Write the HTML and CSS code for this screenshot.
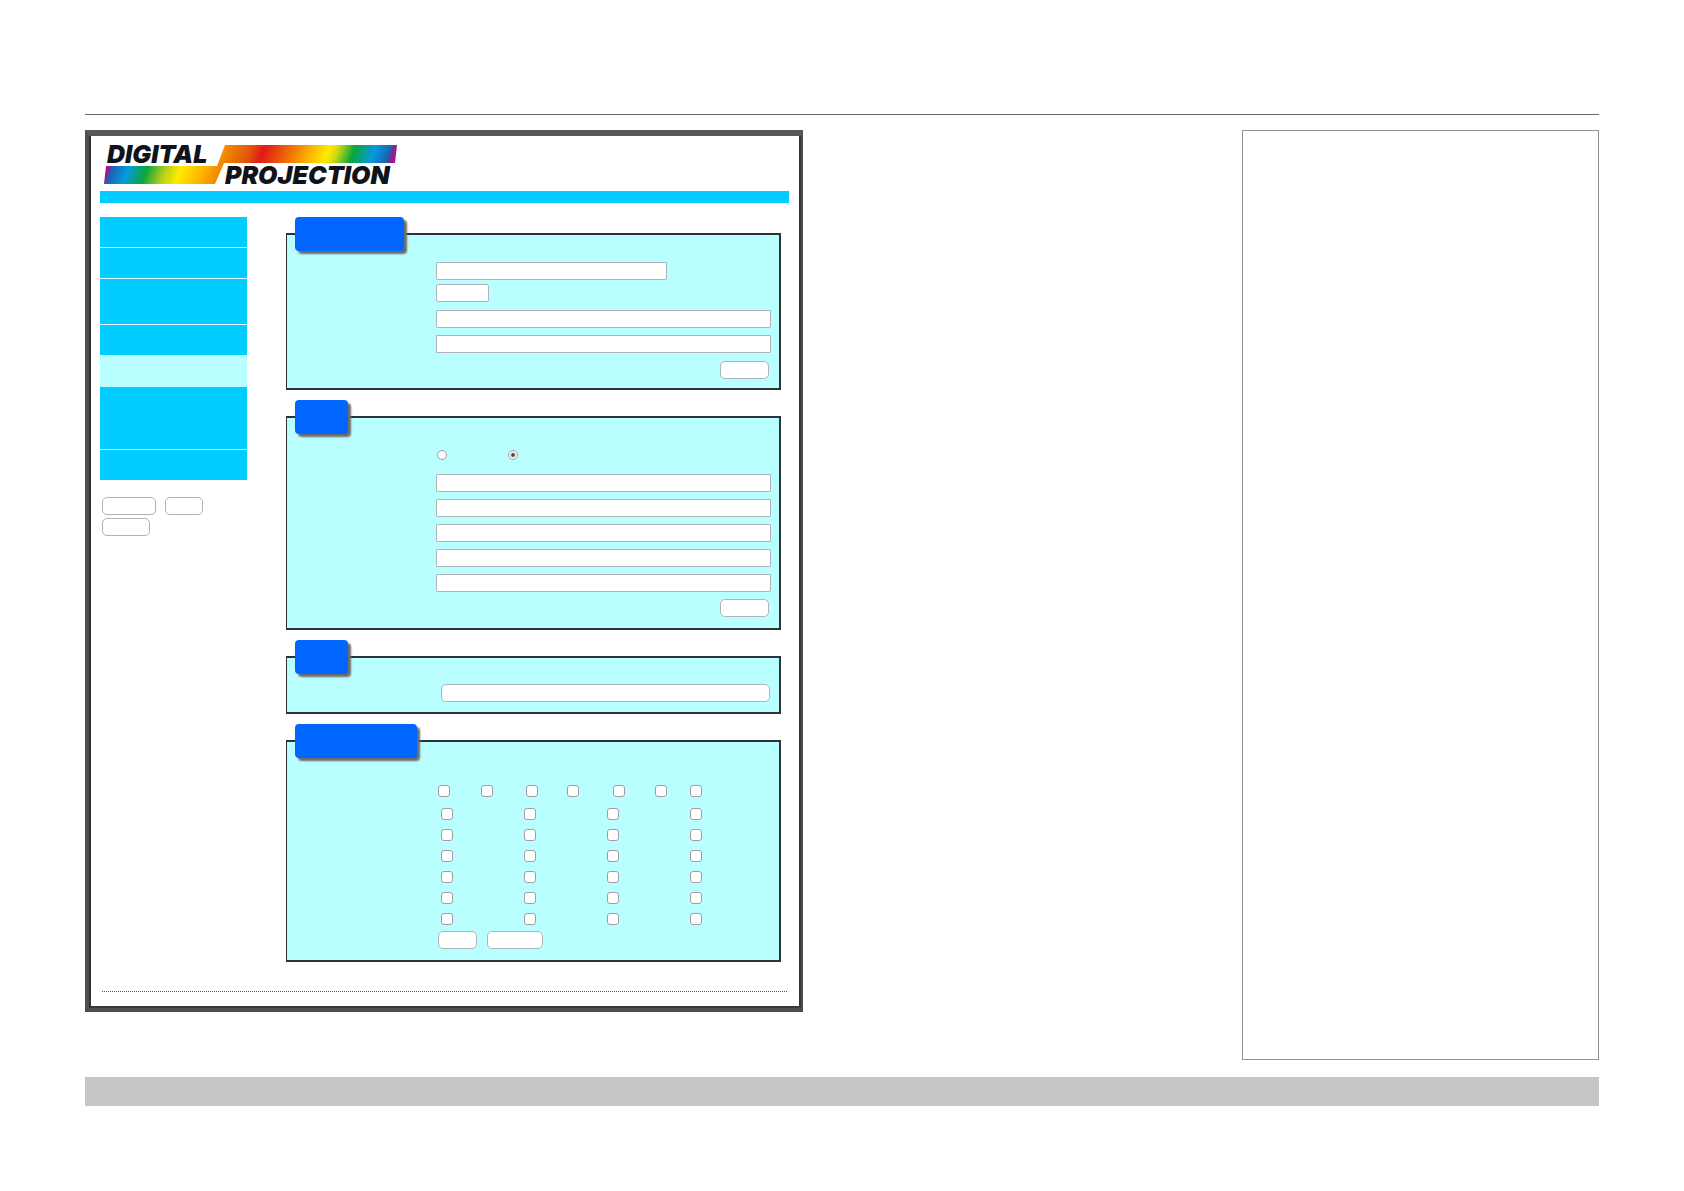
FILE: index.html
```html
<!DOCTYPE html>
<html lang="en">
<head>
<meta charset="utf-8">
<meta name="viewport" content="width=device-width, initial-scale=1">
<title>Digital Projection</title>
<link rel="stylesheet" href="styles.css">
</head>
<body>
<header class="page-head"></header>
<main class="sheet">
  <div class="frame">
    <svg class="logo" width="293" height="39" viewBox="0 0 293 39" role="img" aria-label="Digital Projection">
      <defs>
        <linearGradient id="spectrum" gradientUnits="userSpaceOnUse" x1="6" y1="0" x2="299" y2="0" gradientTransform="skewX(-20)">
          <stop offset="0.025" stop-color="#9b1a8c"/>
          <stop offset="0.035" stop-color="#1f5fae"/>
          <stop offset="0.09" stop-color="#0799e0"/>
          <stop offset="0.155" stop-color="#0aa63c"/>
          <stop offset="0.22" stop-color="#b5d01c"/>
          <stop offset="0.27" stop-color="#ffea00"/>
          <stop offset="0.35" stop-color="#fcb400"/>
          <stop offset="0.42" stop-color="#f07c00"/>
          <stop offset="0.48" stop-color="#e25a08"/>
          <stop offset="0.53" stop-color="#e01a18"/>
          <stop offset="0.6" stop-color="#ea5a0c"/>
          <stop offset="0.68" stop-color="#f9a800"/>
          <stop offset="0.75" stop-color="#ffea00"/>
          <stop offset="0.78" stop-color="#d8dc10"/>
          <stop offset="0.84" stop-color="#0aa63c"/>
          <stop offset="0.91" stop-color="#0799e0"/>
          <stop offset="0.965" stop-color="#1f5fae"/>
          <stop offset="0.975" stop-color="#9b1a8c"/>
        </linearGradient>
      </defs>
      <path fill="url(#spectrum)" d="M121 0H293L291 18H120L111 39H0L2 21H113Z"/>
      <text class="logo-text" x="3" y="18">DIGITAL</text>
      <text class="logo-text" x="121" y="39">PROJECTION</text>
    </svg>
    <div class="bar"></div>
    <div class="columns">
      <aside class="side">
        <nav aria-label="Sections">
          <ul class="menu">
            <li><a href="#p1" aria-label="Section 1"></a></li>
            <li><a href="#p2" aria-label="Section 2"></a></li>
            <li><a class="two-lines" href="#p3" aria-label="Section 3"></a></li>
            <li><a class="flush" href="#p4" aria-label="Section 4"></a></li>
            <li><a class="active" href="#p5" aria-label="Section 5" aria-current="page"></a></li>
            <li><a class="three-lines" href="#p6" aria-label="Section 6"></a></li>
            <li><a class="flush" href="#p7" aria-label="Section 7"></a></li>
          </ul>
        </nav>
        <div class="side-buttons">
          <button class="btn w54" type="button" aria-label="Action 1"></button>
          <button class="btn w38" type="button" aria-label="Action 2"></button>
          <button class="btn w48" type="button" aria-label="Action 3"></button>
        </div>
      </aside>
      <form class="panels">
        <fieldset class="panel">
          <legend class="tab w109"></legend>
          <div class="fields">
            <input class="box short" type="text" aria-label="Name">
            <button class="btn square w53" type="button" aria-label="Set"></button>
            <input class="box spaced" type="text" aria-label="Value 1">
            <input class="box spaced" type="text" aria-label="Value 2">
            <button class="btn spaced end w49" type="button" aria-label="Submit"></button>
          </div>
        </fieldset>
        <fieldset class="panel">
          <legend class="tab w53"></legend>
          <div class="fields network">
            <div class="radios">
              <input class="radio" type="radio" name="mode" aria-label="On">
              <input class="radio" type="radio" name="mode" aria-label="Off" checked>
            </div>
            <input class="box" type="text" aria-label="Address 1">
            <input class="box" type="text" aria-label="Address 2">
            <input class="box" type="text" aria-label="Address 3">
            <input class="box" type="text" aria-label="Address 4">
            <input class="box" type="text" aria-label="Address 5">
            <button class="btn end w49" type="button" aria-label="Submit"></button>
          </div>
        </fieldset>
        <fieldset class="panel">
          <legend class="tab w53"></legend>
          <div class="fields single">
            <button class="btn" type="button" aria-label="Open"></button>
          </div>
        </fieldset>
        <fieldset class="panel">
          <legend class="tab w122"></legend>
          <div class="fields schedule">
            <div class="days">
              <input class="check" type="checkbox" aria-label="Day 1">
              <input class="check" type="checkbox" aria-label="Day 2">
              <input class="check" type="checkbox" aria-label="Day 3">
              <input class="check" type="checkbox" aria-label="Day 4">
              <input class="check" type="checkbox" aria-label="Day 5">
              <input class="check" type="checkbox" aria-label="Day 6">
              <input class="check" type="checkbox" aria-label="Day 7">
            </div>
            <div class="hours">
              <input class="check" type="checkbox" aria-label="Hour 1">
              <input class="check" type="checkbox" aria-label="Hour 2">
              <input class="check" type="checkbox" aria-label="Hour 3">
              <input class="check" type="checkbox" aria-label="Hour 4">
              <input class="check" type="checkbox" aria-label="Hour 5">
              <input class="check" type="checkbox" aria-label="Hour 6">
              <input class="check" type="checkbox" aria-label="Hour 7">
              <input class="check" type="checkbox" aria-label="Hour 8">
              <input class="check" type="checkbox" aria-label="Hour 9">
              <input class="check" type="checkbox" aria-label="Hour 10">
              <input class="check" type="checkbox" aria-label="Hour 11">
              <input class="check" type="checkbox" aria-label="Hour 12">
              <input class="check" type="checkbox" aria-label="Hour 13">
              <input class="check" type="checkbox" aria-label="Hour 14">
              <input class="check" type="checkbox" aria-label="Hour 15">
              <input class="check" type="checkbox" aria-label="Hour 16">
              <input class="check" type="checkbox" aria-label="Hour 17">
              <input class="check" type="checkbox" aria-label="Hour 18">
              <input class="check" type="checkbox" aria-label="Hour 19">
              <input class="check" type="checkbox" aria-label="Hour 20">
              <input class="check" type="checkbox" aria-label="Hour 21">
              <input class="check" type="checkbox" aria-label="Hour 22">
              <input class="check" type="checkbox" aria-label="Hour 23">
              <input class="check" type="checkbox" aria-label="Hour 24">
            </div>
            <div class="actions">
              <button class="btn w39" type="button" aria-label="Set"></button>
              <button class="btn w56" type="button" aria-label="Clear"></button>
            </div>
          </div>
        </fieldset>
      </form>
    </div>
    <hr class="dots">
  </div>
  <aside class="notes"></aside>
</main>
<footer class="page-foot"></footer>
</body>
</html>
```

FILE: styles.css
```css
* { box-sizing: border-box; }

body {
  margin: 0;
  padding: 0 85px 85px;
  background: #fff;
  font-family: Inter, "Liberation Sans", sans-serif;
}

.page-head {
  height: 115px;
  border-bottom: 1px solid #666;
}

.sheet {
  display: grid;
  grid-template-columns: 718fr 439fr 357fr;
  margin-top: 15px;
}

.frame {
  align-self: start;
  margin-bottom: 48px;
  padding: 9px 12px 16px 11px;
  border: 4px solid #4e4e4e;
  border-top: 6px solid #585858;
  border-right-width: 2px;
  box-shadow: inset 2px 0 #303234, inset -2px -2px #363839;
}

.notes {
  grid-column: 3;
  border: 1px solid #929292;
}

.page-foot {
  height: 29px;
  margin-top: 17px;
  background: #c6c6c6;
}

.logo {
  display: block;
  margin-left: 4px;
  overflow: visible;
}

.logo-text {
  fill: #10141a;
  font-size: 25px;
  font-weight: 900;
  font-style: italic;
}

.bar {
  height: 12px;
  margin: 7px 0 14px;
  background: #00ccff;
}

.columns {
  display: flex;
  gap: 39px;
  padding-right: 8px;
}

.side { width: 147px; }

.menu {
  margin: 0;
  padding: 0;
  list-style: none;
}

.menu a {
  display: block;
  height: 31px;
  border-bottom: 1px solid #e6faff;
  background: #00ccff;
}

.menu .two-lines { height: 46px; }
.menu .three-lines { height: 63px; }
.menu .flush { height: 30px; border-bottom: 0; }
.menu .active { height: 32px; border-bottom: 0; background: #b9ffff; }

.side-buttons {
  display: flex;
  flex-wrap: wrap;
  gap: 3px 9px;
  padding: 17px 30px 0 2px;
}

.btn {
  height: 18px;
  padding: 0;
  border: 1px solid #b0b4b8;
  border-radius: 5px;
  background: #fff;
}

.square { border-radius: 2px; }

.w38 { width: 38px; }
.w39 { width: 39px; }
.w48 { width: 48px; }
.w49 { width: 49px; }
.w53 { width: 53px; }
.w54 { width: 54px; }
.w56 { width: 56px; }
.w109 { width: 109px; }
.w122 { width: 122px; }

.panels {
  flex: 1;
  display: flex;
  flex-direction: column;
  gap: 10px;
}

.panel {
  min-width: 0;
  margin: 0;
  padding: 0 8px;
  border: 2px solid #2c3336;
  border-left-width: 1px;
  background: #b9ffff;
}

.tab {
  height: 34px;
  padding: 0;
  border-radius: 4px;
  background: #0066ff;
  box-shadow: 3px 3px 2px #6b6b6b;
}

.fields {
  display: flex;
  flex-direction: column;
  margin-left: 141px;
  padding: 11px 0 9px;
}

.box {
  width: 100%;
  height: 18px;
  padding: 0 4px;
  border: 1px solid #b0b4b8;
  border-radius: 1px;
  background: #fff;
}

.short { width: 69%; margin-bottom: 4px; }
.spaced { margin-top: 8px; }
.spaced + .spaced { margin-top: 7px; }
.spaced + .end { margin-top: 8px; }
.end { align-self: flex-end; margin-right: 2px; }

.network {
  gap: 7px;
  padding: 12px 0 11px;
}

.radios {
  display: flex;
  align-items: center;
  gap: 61px;
  height: 18px;
  margin-bottom: 3px;
  padding-left: 1px;
}

.radio {
  appearance: none;
  width: 10px;
  height: 10px;
  margin: 0;
  border: 1px solid #a39aa4;
  border-radius: 50%;
  background: #fff;
}

.radio:checked {
  background: radial-gradient(circle, #444 0 1px, #fff 3px);
}

.single { padding: 10px 1px 10px 5px; }

.schedule { padding: 27px 0 11px; }

.check {
  appearance: none;
  width: 12px;
  height: 12px;
  margin: 0;
  border: 1px solid #a39aa4;
  border-radius: 3px;
  background: #fff;
}

.days {
  display: grid;
  grid-template-columns: 43px 45px 41px 46px 42px 35px 12px;
  padding-left: 2px;
}

.hours {
  display: grid;
  grid-template-columns: repeat(3, 83px) 12px;
  row-gap: 9px;
  margin: 11px 0 6px;
  padding-left: 5px;
}

.actions {
  display: flex;
  gap: 10px;
  padding-left: 2px;
}

.dots {
  width: auto;
  margin: 29px 2px 0;
  border: 0;
  border-top: 1px dotted #555;
}
```
